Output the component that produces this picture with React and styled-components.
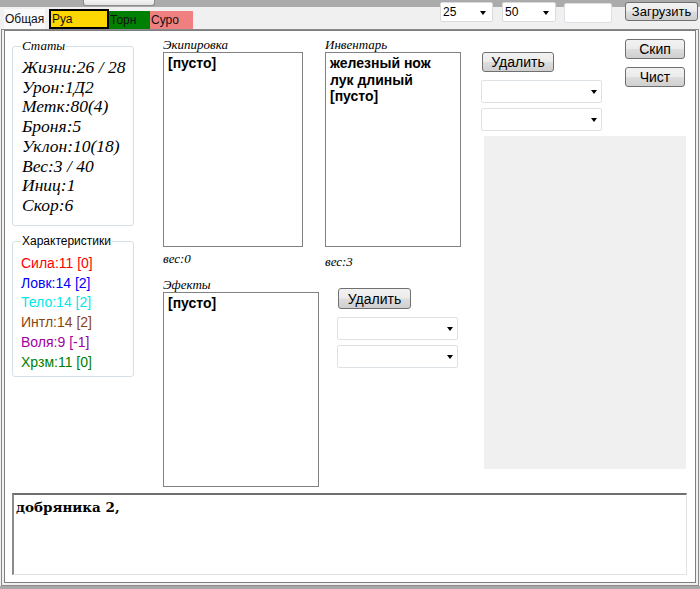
import React from "react";
import styled, { createGlobalStyle } from "styled-components";

const Global = createGlobalStyle`
  html, body { margin: 0; padding: 0; background: #f0f0f0; }
  body { font-family: "Liberation Sans", Arial, sans-serif; }
  #root { width: 700px; height: 589px; overflow: hidden; }
  * { box-sizing: border-box; }
`;

const Window = styled.div`
  width: 700px;
  height: 589px;
  display: flex;
  flex-direction: column;
  background: #f0f0f0;
  overflow: hidden;
`;

const TopStrip = styled.div`
  height: 29px;
  flex: none;
  display: flex;
  justify-content: space-between;
  background: linear-gradient(#ababab 0 7px, #f0f0f0 7px);
`;

const LeftTop = styled.div`
  display: flex;
  flex-direction: column;
`;

const StubButton = styled.div`
  margin-left: 83px;
  width: 72px;
  height: 6px;
  background: linear-gradient(#f4f4f4, #e4e4e4);
  border: 1px solid #8c8c8c;
  border-top: none;
  border-radius: 0 0 3px 3px;
`;

const TabRow = styled.div`
  display: flex;
  align-items: flex-end;
  margin-top: 3px;
  padding-left: 4px;
  height: 20px;
`;

const Tab = styled.div`
  width: ${(p) => p.$w}px;
  height: ${(p) => p.$h}px;
  margin-left: ${(p) => p.$ml || 0}px;
  background: ${(p) => p.$bg};
  border: ${(p) => (p.$frame ? "2px solid #000" : "none")};
  color: #111;
  font-size: 12px;
  line-height: ${(p) => (p.$frame ? p.$h - 4 : p.$h)}px;
  padding-left: 1px;
  white-space: nowrap;
  align-self: ${(p) => (p.$top ? "flex-start" : "flex-end")};
`;

const RightTop = styled.div`
  display: flex;
  align-items: flex-start;
  padding-top: 2px;
  padding-right: 2px;
`;

const Combo = styled.div`
  width: ${(p) => p.$w}px;
  height: ${(p) => p.$h}px;
  margin-left: ${(p) => p.$ml || 0}px;
  margin-top: ${(p) => p.$mt || 0}px;
  flex: none;
  background: #fff;
  border: 1px solid ${(p) => p.$bc || "#dde2e7"};
  border-radius: 2px;
  display: flex;
  align-items: center;
  justify-content: space-between;
  padding: 0 ${(p) => p.$pr || 4}px 0 2px;
  font-size: 12px;
  color: #000;
`;

const Arrow = styled.span`
  width: 0;
  height: 0;
  border-left: 3.5px solid transparent;
  border-right: 3.5px solid transparent;
  border-top: 4px solid #000;
  margin-top: 1px;
`;

const TextBox = styled.div`
  width: 48px;
  height: 20px;
  margin-left: 8px;
  margin-top: 0.5px;
  background: #fff;
  border: 1px solid #dcdfe3;
  border-radius: 2px;
`;

const Button = styled.div`
  width: ${(p) => p.$w}px;
  height: ${(p) => p.$h}px;
  margin-left: ${(p) => p.$ml || 0}px;
  margin-top: ${(p) => p.$mt || 0}px;
  flex: none;
  border: 1px solid #707070;
  border-radius: 3px;
  background: linear-gradient(#f2f2f2 0%, #ebebeb 48%, #dddddd 52%, #cfcfcf 100%);
  display: flex;
  align-items: center;
  justify-content: center;
  font-size: ${(p) => p.$fs || 14}px;
  color: #000;
  white-space: nowrap;
`;

const Panel = styled.div`
  height: 557px;
  flex: none;
  margin: 0 1px;
  border: 1px solid #8a8a8a;
  padding: 0 2px 2px 2px;
  display: flex;
  background: #f0f0f0;
`;

const Frame = styled.div`
  flex: 1;
  border: 1px solid #7f7f7f;
  background: #fff;
  display: flex;
  flex-direction: column;
  padding: 0 8px 7px 7px;
`;

const BottomBar = styled.div`
  height: 3px;
  flex: none;
  background: #a8a8a8;
`;

const Upper = styled.div`
  flex: 1;
  display: flex;
  min-height: 0;
`;

const LeftCol = styled.div`
  width: 122px;
  flex: none;
  display: flex;
  flex-direction: column;
  padding-top: 8px;
  gap: 8px;
`;

const Group = styled.fieldset`
  margin: 0;
  min-width: 0;
  height: ${(p) => p.$h}px;
  padding: ${(p) => p.$pt}px 8px 0 8px;
  border: 1px solid #d5dfe5;
  border-radius: 3px;
`;

const Legend = styled.legend`
  padding: 0 1px;
  font-family: ${(p) => (p.$serif ? '"Liberation Serif", serif' : '"Liberation Sans", sans-serif')};
  font-style: ${(p) => (p.$serif ? "italic" : "normal")};
  font-size: ${(p) => (p.$serif ? 13 : 12)}px;
  line-height: 14px;
  color: #000;
`;

const StatLine = styled.div`
  font-family: "Liberation Serif", "Times New Roman", serif;
  font-style: italic;
  font-size: 17.5px;
  line-height: 19.7px;
  color: #000;
  white-space: nowrap;
  padding-left: 1px;
`;

const CharLine = styled.div`
  font-family: "Liberation Sans", Arial, sans-serif;
  font-size: 14px;
  line-height: 19.7px;
  color: ${(p) => p.$c};
  white-space: nowrap;
`;

const Middle = styled.div`
  width: 298px;
  margin-left: 29px;
  flex: none;
  display: flex;
  flex-direction: column;
  padding-top: 7px;
`;

const MidRow = styled.div`
  display: flex;
  align-items: flex-start;
  margin-top: ${(p) => p.$mt || 0}px;
`;

const ListCol = styled.div`
  width: ${(p) => p.$w}px;
  margin-left: ${(p) => p.$ml || 0}px;
  flex: none;
  display: flex;
  flex-direction: column;
`;

const Caption = styled.div`
  font-family: "Liberation Serif", "Times New Roman", serif;
  font-style: italic;
  font-size: 13px;
  line-height: 14px;
  height: 14px;
  margin-top: ${(p) => p.$mt || 0}px;
  color: #000;
  white-space: nowrap;
`;

const ListBox = styled.div`
  height: 195px;
  border: 1px solid #828282;
  padding: 2px 4px;
  background: #fff;
`;

const ListItem = styled.div`
  font-family: "Liberation Sans", Arial, sans-serif;
  font-weight: bold;
  font-size: 14px;
  line-height: 16.5px;
  color: #000;
  white-space: nowrap;
`;

const ActionCol = styled.div`
  display: flex;
  flex-direction: column;
  margin-left: ${(p) => p.$ml || 0}px;
  padding-top: ${(p) => p.$pt || 0}px;
  gap: 5px;
`;

const RightCol = styled.div`
  width: 205px;
  margin-left: 20px;
  flex: none;
  display: flex;
  flex-direction: column;
  padding-top: 8px;
`;

const RightTopRow = styled.div`
  display: flex;
  justify-content: space-between;
  align-items: flex-start;
`;

const RightSub = styled.div`
  display: flex;
  flex-direction: column;
  gap: 8px;
  margin-right: ${(p) => p.$mr || 0}px;
`;

const GrayPanel = styled.div`
  margin-top: 5px;
  margin-left: 3px;
  height: 333px;
  background: #f0f0f0;
`;

const Log = styled.div`
  height: 82px;
  flex: none;
  border-top: 2px solid #6f6f6f;
  border-left: 2px solid #8a8a8a;
  border-right: 1px solid #e3e3e3;
  border-bottom: 1px solid #e3e3e3;
  padding: 4px 2px;
  font-family: "DejaVu Serif", "Liberation Serif", serif;
  font-weight: bold;
  font-size: 13.5px;
  line-height: 16px;
  color: #000;
`;

const stats = [
  "Жизни:26 / 28",
  "Урон:1Д2",
  "Метк:80(4)",
  "Броня:5",
  "Уклон:10(18)",
  "Вес:3 / 40",
  "Иниц:1",
  "Скор:6",
];

const chars = [
  ["Сила:11 [0]", "#ff0000"],
  ["Ловк:14 [2]", "#0000ff"],
  ["Тело:14 [2]", "#00e8e8"],
  ["Интл:14 [2]", "#8b4513"],
  ["Воля:9 [-1]", "#a000a0"],
  ["Хрзм:11 [0]", "#008000"],
];

const DropDown = ({ w, h, ml, mt, pr, bc, value }) => (
  <Combo $w={w} $h={h} $ml={ml} $mt={mt} $pr={pr} $bc={bc}>
    <span>{value}</span>
    <Arrow />
  </Combo>
);

export default function App() {
  return (
    <Window>
      <Global />
      <TopStrip>
        <LeftTop>
          <StubButton />
          <TabRow>
            <Tab $w={41} $h={20} $bg="#f9f9f9" $top>Общая</Tab>
            <Tab $w={60} $h={20} $ml={4} $bg="#ffd700" $frame>Руа</Tab>
            <Tab $w={41} $h={18} $bg="#008000">Торн</Tab>
            <Tab $w={43} $h={18} $bg="#f08080">Суро</Tab>
          </TabRow>
        </LeftTop>
        <RightTop>
          <DropDown w={53} h={20} value="25" pr={6} bc="#dadada" />
          <DropDown w={54} h={20} ml={9} value="50" pr={6} bc="#dadada" />
          <TextBox />
          <Button $w={73} $h={19} $ml={13} $fs={13}>Загрузить</Button>
        </RightTop>
      </TopStrip>

      <Panel>
        <Frame>
          <Upper>
            <LeftCol>
              <Group $h={187} $pt={5}>
                <Legend $serif>Статы</Legend>
                {stats.map((s) => (
                  <StatLine key={s}>{s}</StatLine>
                ))}
              </Group>
              <Group $h={143} $pt={6}>
                <Legend>Характеристики</Legend>
                {chars.map(([t, c]) => (
                  <CharLine key={t} $c={c}>{t}</CharLine>
                ))}
              </Group>
            </LeftCol>

            <Middle>
              <MidRow>
                <ListCol $w={140}>
                  <Caption>Экипировка</Caption>
                  <ListBox>
                    <ListItem>[пусто]</ListItem>
                  </ListBox>
                  <Caption $mt={5}>вес:0</Caption>
                </ListCol>
                <ListCol $w={136} $ml={22}>
                  <Caption>Инвентарь</Caption>
                  <ListBox>
                    <ListItem>железный нож</ListItem>
                    <ListItem>лук длиный</ListItem>
                    <ListItem>[пусто]</ListItem>
                  </ListBox>
                  <Caption $mt={8}>вес:3</Caption>
                </ListCol>
              </MidRow>
              <MidRow $mt={9}>
                <ListCol $w={156}>
                  <Caption>Эфекты</Caption>
                  <ListBox>
                    <ListItem>[пусто]</ListItem>
                  </ListBox>
                </ListCol>
                <ActionCol $ml={18} $pt={10}>
                  <Button $w={73} $h={21} $ml={1}>Удалить</Button>
                  <DropDown w={121} h={23} mt={3} value="" />
                  <DropDown w={121} h={23} value="" />
                </ActionCol>
              </MidRow>
            </Middle>

            <RightCol>
              <RightTopRow>
                <ActionCol $pt={13}>
                  <Button $w={72} $h={20} $ml={1}>Удалить</Button>
                  <DropDown w={121} h={23} mt={3} value="" />
                  <DropDown w={121} h={23} value="" />
                </ActionCol>
                <RightSub $mr={1}>
                  <Button $w={60} $h={20}>Скип</Button>
                  <Button $w={60} $h={20}>Чист</Button>
                </RightSub>
              </RightTopRow>
              <GrayPanel />
            </RightCol>
          </Upper>
          <Log>добряника 2,</Log>
        </Frame>
      </Panel>
      <BottomBar />
    </Window>
  );
}
